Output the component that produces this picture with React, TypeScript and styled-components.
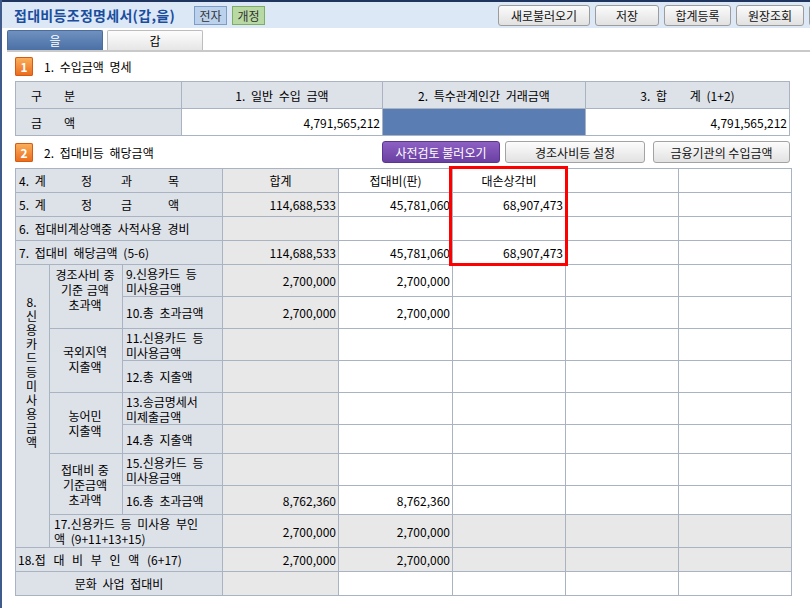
import React from 'react'
import styled, { createGlobalStyle } from 'styled-components'

const GlobalStyle = createGlobalStyle`
  html, body {
    margin: 0;
    padding: 0;
    background: #fff;
  }
  body {
    font-family: 'Noto Sans CJK KR', 'Noto Sans', sans-serif;
    font-size: 12px;
    color: #000;
    word-spacing: 3px;
  }
`

const Page = styled.div`
  width: 808px;
  height: 608px;
  overflow: hidden;
  border-left: 2px solid #3f5b8c;
  background: #fff;
`

const TopStrip = styled.div`
  height: 2px;
  background: #1f355f;
`

const TitleBar = styled.div`
  height: 26px;
  background: #dce8f6;
  overflow: hidden;
`

const TitleInner = styled.div`
  width: 881px;
  height: 100%;
  display: flex;
  align-items: center;
  padding: 0 6px 0 12px;
  box-sizing: border-box;
`

const Title = styled.h1`
  margin: 0;
  font-size: 14px;
  font-weight: bold;
  color: #1b4d9e;
  word-spacing: 0;
  letter-spacing: 0.3px;
`

const Badge = styled.span<{ $tone: 'blue' | 'green' }>`
  display: inline-flex;
  align-items: center;
  justify-content: center;
  width: 31px;
  height: 17px;
  margin-left: ${p => (p.$tone === 'blue' ? '19px' : '5px')};
  border: 1px solid ${p => (p.$tone === 'blue' ? '#7e9dc6' : '#80ad66')};
  background: ${p => (p.$tone === 'blue' ? '#bcd2ec' : '#b8d9a3')};
  color: #333;
  font-size: 12px;
`

const ToolGroup = styled.div`
  margin-left: auto;
  display: flex;
  gap: 5px;
`

const ToolButton = styled.button<{ $w: number }>`
  width: ${p => p.$w}px;
  height: 21px;
  padding: 0;
  font-family: inherit;
  font-size: 12px;
  color: #111;
  border: 1px solid #9c9c9c;
  border-radius: 3px;
  background: linear-gradient(#fbfbfb, #e1e1e1);
  word-spacing: 0;
`

const TabRow = styled.div`
  display: flex;
  gap: 4px;
  margin: 2px 0 0 5px;
  border-bottom: 2px solid #c9c9c9;
`

const Tab = styled.div<{ $active?: boolean }>`
  width: 96px;
  height: 20px;
  display: flex;
  align-items: center;
  justify-content: center;
  box-sizing: border-box;
  font-size: 12px;
  color: ${p => (p.$active ? '#fff' : '#000')};
  border: 1px solid ${p => (p.$active ? '#4c6d9c' : '#bdbdbd')};
  border-bottom: none;
  border-radius: 2px 2px 0 0;
  background: ${p =>
    p.$active
      ? 'linear-gradient(#6f91c0, #4b70a5)'
      : 'linear-gradient(#fdfdfd, #e6e6e6)'};
`

const Content = styled.div`
  padding-left: 13px;
`

const SectionHead = styled.div<{ $top: number }>`
  display: flex;
  align-items: center;
  height: 22px;
  margin-top: ${p => p.$top}px;
  width: 775px;
`

const NumIcon = styled.span`
  width: 18px;
  height: 19px;
  display: inline-flex;
  align-items: center;
  justify-content: center;
  border-radius: 2px;
  background: linear-gradient(#fbb25d, #ea6a1c);
  box-shadow: inset 0 0 0 1px #d65a12;
  color: #fff;
  font-weight: bold;
  font-size: 12px;
`

const SectionTitle = styled.span`
  margin-left: 11px;
  font-size: 12px;
`

const HeadButtons = styled.div`
  margin-left: auto;
  display: flex;
  gap: 5px;
`

const ActionButton = styled.button<{ $w: number; $purple?: boolean; $gap?: number }>`
  width: ${p => p.$w}px;
  height: 22px;
  padding: 0;
  margin-left: ${p => p.$gap || 0}px;
  font-family: inherit;
  font-size: 12px;
  border-radius: 3px;
  border: 1px solid ${p => (p.$purple ? '#5b3592' : '#a3a3a3')};
  color: ${p => (p.$purple ? '#fff' : '#111')};
  background: ${p =>
    p.$purple
      ? 'linear-gradient(#8d60c3, #6b40a3)'
      : 'linear-gradient(#fcfcfc, #e2e2e2)'};
`

const Table = styled.table`
  border-collapse: collapse;
  table-layout: fixed;
  border: 1px solid #a9b3c1;
`

const Cell = styled.td<{
  $bg?: 'label' | 'sum' | 'blue' | 'white'
  $align?: 'left' | 'right' | 'center'
  $pl?: number
  $ws?: number
}>`
  border: 1px solid #a9b3c1;
  padding: 0 2px 0 ${p => (p.$pl !== undefined ? p.$pl : 2)}px;
  line-height: 15px;
  vertical-align: middle;
  text-align: ${p => p.$align || 'left'};
  overflow: hidden;
  white-space: nowrap;
  ${p => (p.$ws !== undefined ? `word-spacing: ${p.$ws}px;` : '')}
  background: ${p =>
    p.$bg === 'label'
      ? '#dde1e8'
      : p.$bg === 'sum'
      ? '#e8e8e8'
      : p.$bg === 'blue'
      ? '#5a7db4'
      : '#fff'};
`

const Spread = styled.div<{ $cols: string }>`
  display: grid;
  grid-template-columns: ${p => p.$cols};
`

const Vertical = styled.div`
  width: 13px;
  margin: 0 auto;
  white-space: normal;
  word-break: break-all;
  line-height: 14px;
  text-align: center;
  padding-bottom: 68px;
`

const Group = styled.div<{ $pb?: number }>`
  text-align: center;
  line-height: 15px;
  padding-bottom: ${p => p.$pb || 0}px;
  word-spacing: 1px;
`

const TableWrap = styled.div<{ $top: number }>`
  position: relative;
  width: 776px;
  margin-top: ${p => p.$top}px;
`

const Highlight = styled.div`
  position: absolute;
  left: 434px;
  top: -2px;
  width: 113px;
  height: 94px;
  border: 3px solid #f00;
  pointer-events: none;
`

const Row = styled.tr<{ $h: number }>`
  height: ${p => p.$h}px;
`

const Empty = ({ n, bg }: { n: number; bg?: 'sum' | 'white' }) => (
  <>
    {Array.from({ length: n }).map((_, i) => (
      <Cell key={i} $bg={bg || 'white'} />
    ))}
  </>
)

const Num = ({ v, bg }: { v?: string; bg?: 'sum' | 'white' }) => (
  <Cell $bg={bg || 'white'} $align="right">
    {v}
  </Cell>
)

export default function App() {
  return (
    <Page>
      <GlobalStyle />
      <TopStrip />
      <TitleBar>
        <TitleInner>
          <Title>접대비등조정명세서(갑,을)</Title>
          <Badge $tone="blue">전자</Badge>
          <Badge $tone="green">개정</Badge>
          <ToolGroup>
            <ToolButton $w={92}>새로불러오기</ToolButton>
            <ToolButton $w={64}>저장</ToolButton>
            <ToolButton $w={67}>합계등록</ToolButton>
            <ToolButton $w={68}>원장조회</ToolButton>
            <ToolButton $w={68} aria-label="닫기" />
          </ToolGroup>
        </TitleInner>
      </TitleBar>

      <TabRow>
        <Tab $active>을</Tab>
        <Tab>갑</Tab>
      </TabRow>

      <Content>
        <SectionHead $top={3}>
          <NumIcon>1</NumIcon>
          <SectionTitle>1. 수입금액 명세</SectionTitle>
        </SectionHead>

        <TableWrap $top={4}>
          <Table style={{ width: 774 }}>
            <colgroup>
              <col style={{ width: 166 }} />
              <col style={{ width: 201 }} />
              <col style={{ width: 203 }} />
              <col style={{ width: 204 }} />
            </colgroup>
            <tbody>
              <Row $h={27}>
                <Cell $bg="label" $pl={15}>
                  <Spread $cols="33px auto">
                    <span>구</span>
                    <span>분</span>
                  </Spread>
                </Cell>
                <Cell $bg="label" $align="center">1. 일반 수입 금액</Cell>
                <Cell $bg="label" $align="center">2. 특수관계인간 거래금액</Cell>
                <Cell $bg="label" $align="center" style={{ whiteSpace: 'pre' }}>
                  3. 합    계 (1+2)
                </Cell>
              </Row>
              <Row $h={27}>
                <Cell $bg="label" $pl={15}>
                  <Spread $cols="33px auto">
                    <span>금</span>
                    <span>액</span>
                  </Spread>
                </Cell>
                <Num v="4,791,565,212" />
                <Cell $bg="blue" />
                <Num v="4,791,565,212" />
              </Row>
            </tbody>
          </Table>
        </TableWrap>

        <SectionHead $top={5}>
          <NumIcon>2</NumIcon>
          <SectionTitle>2. 접대비등 해당금액</SectionTitle>
          <HeadButtons>
            <ActionButton $w={118} $purple>사전검토 불러오기</ActionButton>
            <ActionButton $w={140}>경조사비등 설정</ActionButton>
            <ActionButton $w={137} $gap={3}>금융기관의 수입금액</ActionButton>
          </HeadButtons>
        </SectionHead>

        <TableWrap $top={5}>
          <Table style={{ width: 776 }}>
            <colgroup>
              <col style={{ width: 34 }} />
              <col style={{ width: 73 }} />
              <col style={{ width: 100 }} />
              <col style={{ width: 116 }} />
              <col style={{ width: 114 }} />
              <col style={{ width: 113 }} />
              <col style={{ width: 113 }} />
              <col style={{ width: 113 }} />
            </colgroup>
            <tbody>
              <Row $h={24}>
                <Cell colSpan={3} $bg="label" $pl={3}>
                  <Spread $cols="62px 40px 47px auto">
                    <span>4. 계</span>
                    <span>정</span>
                    <span>과</span>
                    <span>목</span>
                  </Spread>
                </Cell>
                <Cell $bg="sum" $align="center">합계</Cell>
                <Cell $align="center">접대비(판)</Cell>
                <Cell $align="center">대손상각비</Cell>
                <Empty n={2} />
              </Row>
              <Row $h={24}>
                <Cell colSpan={3} $bg="label" $pl={3}>
                  <Spread $cols="62px 40px 47px auto">
                    <span>5. 계</span>
                    <span>정</span>
                    <span>금</span>
                    <span>액</span>
                  </Spread>
                </Cell>
                <Num v="114,688,533" bg="sum" />
                <Num v="45,781,060" />
                <Num v="68,907,473" />
                <Empty n={2} />
              </Row>
              <Row $h={24}>
                <Cell colSpan={3} $bg="label" $pl={3}>6. 접대비계상액중 사적사용 경비</Cell>
                <Cell $bg="sum" />
                <Empty n={4} />
              </Row>
              <Row $h={24}>
                <Cell colSpan={3} $bg="label" $pl={3}>7. 접대비 해당금액 (5-6)</Cell>
                <Num v="114,688,533" bg="sum" />
                <Num v="45,781,060" />
                <Num v="68,907,473" />
                <Empty n={2} />
              </Row>

              <Row $h={32}>
                <Cell rowSpan={9} $bg="label" $pl={0}>
                  <Vertical>8.신용카드등미사용금액</Vertical>
                </Cell>
                <Cell rowSpan={2} $bg="label" $pl={0}>
                  <Group $pb={14}>
                    경조사비 중<br />기준 금액<br />초과액
                  </Group>
                </Cell>
                <Cell $bg="label" $pl={3}>
                  9.신용카드 등<br />미사용금액
                </Cell>
                <Num v="2,700,000" bg="sum" />
                <Num v="2,700,000" />
                <Empty n={3} />
              </Row>
              <Row $h={32}>
                <Cell $bg="label" $pl={3}>10.총 초과금액</Cell>
                <Num v="2,700,000" bg="sum" />
                <Num v="2,700,000" />
                <Empty n={3} />
              </Row>
              <Row $h={32}>
                <Cell rowSpan={2} $bg="label" $pl={0}>
                  <Group $pb={4}>
                    국외지역<br />지출액
                  </Group>
                </Cell>
                <Cell $bg="label" $pl={3}>
                  11.신용카드 등<br />미사용금액
                </Cell>
                <Cell $bg="sum" />
                <Empty n={4} />
              </Row>
              <Row $h={32}>
                <Cell $bg="label" $pl={3}>12.총 지출액</Cell>
                <Cell $bg="sum" />
                <Empty n={4} />
              </Row>
              <Row $h={32}>
                <Cell rowSpan={2} $bg="label" $pl={0}>
                  <Group>
                    농어민<br />지출액
                  </Group>
                </Cell>
                <Cell $bg="label" $pl={3}>
                  13.송금명세서<br />미제출금액
                </Cell>
                <Cell $bg="sum" />
                <Empty n={4} />
              </Row>
              <Row $h={29}>
                <Cell $bg="label" $pl={3}>14.총 지출액</Cell>
                <Cell $bg="sum" />
                <Empty n={4} />
              </Row>
              <Row $h={32}>
                <Cell rowSpan={2} $bg="label" $pl={0}>
                  <Group>
                    접대비 중<br />기준금액<br />초과액
                  </Group>
                </Cell>
                <Cell $bg="label" $pl={3}>
                  15.신용카드 등<br />미사용금액
                </Cell>
                <Cell $bg="sum" />
                <Empty n={4} />
              </Row>
              <Row $h={29}>
                <Cell $bg="label" $pl={3}>16.총 초과금액</Cell>
                <Num v="8,762,360" bg="sum" />
                <Num v="8,762,360" />
                <Empty n={3} />
              </Row>
              <Row $h={33}>
                <Cell colSpan={2} $bg="label" $pl={4}>
                  17.신용카드 등 미사용 부인<br />액 (9+11+13+15)
                </Cell>
                <Num v="2,700,000" bg="sum" />
                <Num v="2,700,000" bg="sum" />
                <Empty n={3} bg="sum" />
              </Row>
              <Row $h={24}>
                <Cell colSpan={3} $bg="label" $pl={2} $ws={5}>
                  18.접 대 비 부 인 액 (6+17)
                </Cell>
                <Num v="2,700,000" bg="sum" />
                <Num v="2,700,000" bg="sum" />
                <Empty n={3} bg="sum" />
              </Row>
              <Row $h={24}>
                <Cell colSpan={3} $bg="label" $align="center">문화 사업 접대비</Cell>
                <Cell $bg="sum" />
                <Empty n={4} />
              </Row>
            </tbody>
          </Table>
          <Highlight />
        </TableWrap>
      </Content>
    </Page>
  )
}
